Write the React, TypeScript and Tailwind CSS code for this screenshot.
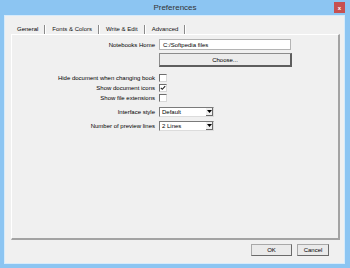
import React from "react"

const tabs = ["General", "Fonts & Colors", "Write & Edit", "Advanced"]

const Checkbox = ({ checked = false }: { checked?: boolean }) => (
  <div className="w-[8px] h-[8px] bg-white border border-t-[#6d6d6d] border-l-[#6d6d6d] border-r-[#d8d8d8] border-b-[#d8d8d8] flex items-center justify-center">
    {checked && (
      <svg width="6" height="6" viewBox="0 0 6 6">
        <path d="M0.8 2.8 L2.3 4.3 L5.2 1.2" stroke="#222" strokeWidth="1.1" fill="none" />
      </svg>
    )}
  </div>
)

const Select = ({ value }: { value: string }) => (
  <div className="w-[55px] h-[10px] bg-white border border-t-[#7a7a7a] border-l-[#7a7a7a] border-r-[#dcdcdc] border-b-[#dcdcdc] flex items-center">
    <span className="flex-1 pl-[2px] leading-none">{value}</span>
    <div className="w-[7px] h-[8px] bg-[#f0f0f0] border-r border-b border-[#6a6a6a] flex items-center justify-center">
      <svg width="5" height="3" viewBox="0 0 5 3">
        <path d="M0 0 H5 L2.5 3 Z" fill="#000" />
      </svg>
    </div>
  </div>
)

const Row = ({ label, children, className = "" }: { label: string; children: React.ReactNode; className?: string }) => (
  <div className={`flex items-center ${className}`}>
    <div className="w-[143px] text-right leading-none whitespace-nowrap">{label}</div>
    <div className="ml-[4px] flex items-center">{children}</div>
  </div>
)

export default function App() {
  return (
    <div
      className="w-[350px] h-[268px] bg-[#8cc5f2] flex flex-col text-[6px] text-black"
      style={{ fontFamily: '"Liberation Sans", Arial, sans-serif' }}
    >
      {/* Title bar */}
      <div className="h-[15px] grid grid-cols-[1fr_auto_1fr] items-center">
        <div />
        <div className="text-[8px] text-[#333] leading-none">Preferences</div>
        <div className="flex justify-end pr-[5px]">
          <div className="w-[11px] h-[11px] bg-[#c75050] flex items-center justify-center text-white text-[6px] font-bold leading-none">
            x
          </div>
        </div>
      </div>

      {/* Client area */}
      <div className="flex-1 ml-[4px] mr-[5px] mb-[4px] bg-[#f0f0f0] border border-[#d6ebfb] flex flex-col">
        {/* Tabs */}
        <div className="h-[18px] pl-[6px] pt-[8px] flex items-stretch">
          {tabs.map((t, i) => (
            <div key={t} className="flex items-center">
              <div className={`px-[6px] leading-none ${i === 0 ? "text-black" : "text-[#111]"}`}>{t}</div>
              <div className="w-[2px] h-[9px] border-l border-[#8a8a8a] border-r border-r-white" />
            </div>
          ))}
        </div>

        {/* Panel */}
        <div className="ml-[6px] mr-[4px] h-[206px] border-l border-t border-white border-r-2 border-b-2 border-r-[#a3a3a3] border-b-[#a3a3a3] pt-[4px] flex flex-col">
          <Row label="Notebooks Home">
            <div className="w-[132px] h-[11px] bg-white border border-[#b4b4b4] flex items-center pl-[3px] leading-none">
              C:/Softpedia files
            </div>
          </Row>
          <div className="ml-[147px] mt-[3px] w-[133px] h-[14px] bg-[#ececec] border border-[#8c8c8c] border-r-2 border-b-2 border-r-[#5e5e5e] border-b-[#5e5e5e] flex items-center justify-center leading-none">
            Choose...
          </div>
          <Row label="Hide document when changing book" className="mt-[6px] h-[10px]">
            <Checkbox />
          </Row>
          <Row label="Show document icons" className="h-[10px]">
            <Checkbox checked />
          </Row>
          <Row label="Show file extensions" className="h-[10px]">
            <Checkbox />
          </Row>
          <Row label="Interface style" className="mt-[4px] h-[10px]">
            <Select value="Default" />
          </Row>
          <Row label="Number of preview lines" className="mt-[4px] h-[10px]">
            <Select value="2 Lines" />
          </Row>
        </div>

        {/* Footer */}
        <div className="mt-[4px] flex justify-end gap-[5px] pr-[15px]">
          <div className="w-[41px] h-[12px] bg-[#eaeaea] border border-[#a8a8a8] border-r-[#6a6a6a] border-b-[#6a6a6a] flex items-center justify-center leading-none">
            OK
          </div>
          <div className="w-[32px] h-[12px] bg-[#eaeaea] border border-[#a8a8a8] border-r-[#6a6a6a] border-b-[#6a6a6a] flex items-center justify-center leading-none">
            Cancel
          </div>
        </div>
      </div>
    </div>
  )
}
